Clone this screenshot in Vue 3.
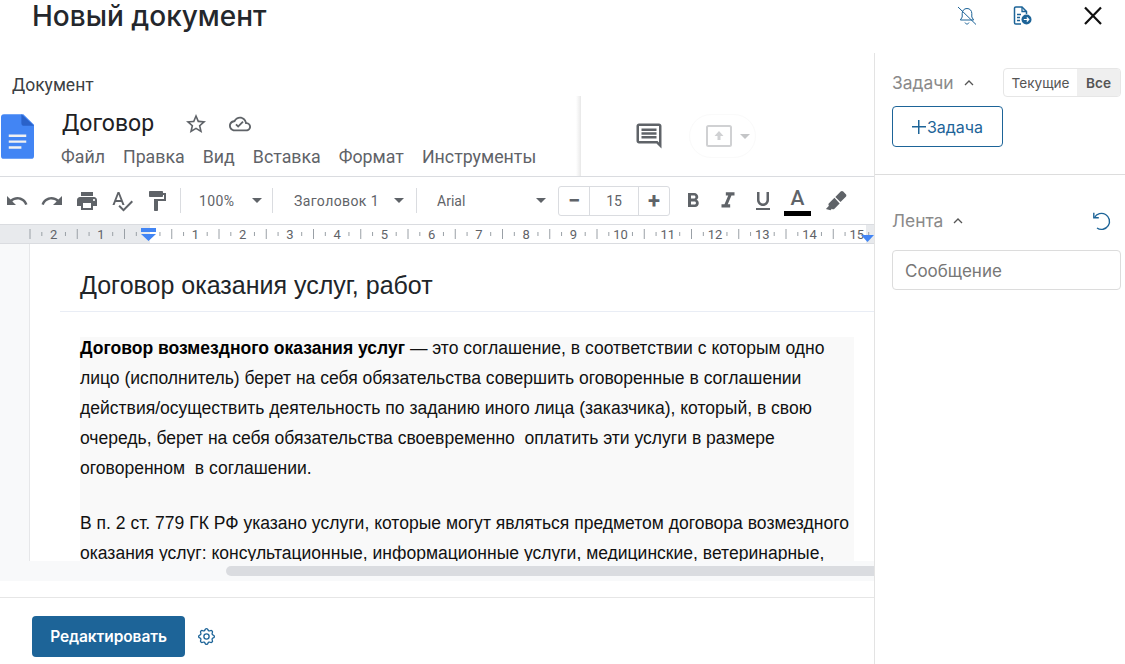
<script setup>
const menu = ['Файл', 'Правка', 'Вид', 'Вставка', 'Формат', 'Инструменты'];

const step = 47.25;
const start = 30;

// слева от отступа цифры идут вниз, справа вверх
const rulerLabels = [];
for (let i = 0; i < 18; i++) {
    const n = Math.abs(i - 2);
    if (n === 0) continue;
    rulerLabels.push({ n, key: i, x: start + step * i + step / 2 });
}

const majorTicks = Array.from({ length: 18 }, (_, i) => start + step * i);
const minorTicks = Array.from({ length: 18 }, (_, i) => start + step * i + step / 4)
    .concat(Array.from({ length: 18 }, (_, i) => start + step * i + (step * 3) / 4));
</script>

<template>
    <div class="page">
        <header class="top">
            <h1 class="top-title">Новый документ</h1>
            <div class="top-actions">
                <svg class="bell" width="24" height="24" viewBox="0 0 24 24" fill="none" stroke="#1d6498" stroke-width="1">
                    <path d="M12 4.500c-3 0-4.800 2.200-4.800 5v3.500l-1.800 3h13.200l-1.800-3V9.500c0-2.800-1.800-5-4.800-5z" />
                    <path d="M10 18.500c.4 1 1.100 1.500 2 1.500s1.600-.5 2-1.500" />
                    <path d="M3 3l18 17.500" />
                </svg>
                <svg class="doc-send" width="22" height="22" viewBox="0 0 22 22" fill="none">
                    <path d="M10 19H4.800A1.300 1.300 0 0 1 3.500 17.700V3.300A1.300 1.300 0 0 1 4.800 2H11l4.500 4.500V9" stroke="#1d6498" stroke-width="1.500" />
                    <path d="M11 2v4.500h4.500" stroke="#1d6498" stroke-width="1.300" />
                    <path d="M6 9.500h4M6 12.500h3M6 15.500h3" stroke="#1d6498" stroke-width="1.400" />
                    <circle cx="15.500" cy="14.500" r="5" fill="#1d6498" />
                    <path d="M12.800 14.500h5M15.800 12.500l2 2-2 2" stroke="#fff" stroke-width="1.200" />
                </svg>
                <svg class="close" width="20" height="20" viewBox="0 0 20 20" stroke="#111" stroke-width="2.200">
                    <path d="M2 1.500l16 16.500M18 1.500L2 18" />
                </svg>
            </div>
        </header>

        <div class="body">
            <main class="main">
                <div class="doc-label">Документ</div>

                <section class="gdoc">
                    <div class="gdoc-head">
                        <div class="gdoc-head-left">
                            <svg class="docs-logo" width="33" height="45" viewBox="0 0 34 46">
                                <path d="M3 0h20l11 11v32a3 3 0 0 1-3 3H3a3 3 0 0 1-3-3V3a3 3 0 0 1 3-3z" fill="#4285f4" />
                                <path d="M21 0l13 12H24a3 3 0 0 1-3-3z" fill="#2a62c9" />
                                <path d="M8 21h18v2.500H8zM8 27h18v2.500H8zM8 33h13v2.500H8z" fill="#f1f1f1" />
                            </svg>
                            <div class="gdoc-head-text">
                                <div class="gdoc-name-row">
                                    <span class="gdoc-name">Договор</span>
                                    <svg width="24" height="24" viewBox="0 0 24 24" fill="#5f6368">
                                        <path d="M22 9.240l-7.190-.62L12 2 9.190 8.630 2 9.240l5.460 4.730L5.820 21 12 17.270 18.180 21l-1.630-7.030L22 9.240zM12 15.400l-3.760 2.270 1-4.280-3.320-2.880 4.380-.38L12 6.100l1.710 4.040 4.380.38-3.320 2.880 1 4.280L12 15.400z" />
                                    </svg>
                                    <svg width="22" height="22" viewBox="0 0 24 24" fill="#5f6368">
                                        <path d="M19.350 10.040C18.670 6.590 15.640 4 12 4 9.110 4 6.600 5.640 5.350 8.040 2.340 8.360 0 10.910 0 14c0 3.310 2.690 6 6 6h13c2.760 0 5-2.240 5-5 0-2.640-2.050-4.780-4.650-4.960zM19 18H6c-2.210 0-4-1.790-4-4 0-2.050 1.530-3.760 3.560-3.970l1.070-.11.500-.95C8.080 7.140 9.940 6 12 6c2.620 0 4.880 1.860 5.390 4.430l.3 1.500 1.530.11c1.560.1 2.780 1.410 2.780 2.960 0 1.650-1.350 3-3 3zm-9-1.820l-3.090-3.090L8.320 11.680 10 13.360l4.600-4.600 1.410 1.410z" />
                                    </svg>
                                </div>
                                <nav class="gdoc-menu">
                                    <span v-for="item in menu" :key="item">{{ item }}</span>
                                </nav>
                            </div>
                        </div>
                        <div class="gdoc-head-right">
                            <svg width="30" height="30" viewBox="0 0 24 24" fill="#5f6368">
                                <path d="M21.990 4c0-1.100-.89-2-1.990-2H4c-1.100 0-2 .9-2 2v12c0 1.100.9 2 2 2h14l4 4-.01-18zM20 4v13.170L18.830 16H4V4h16zM6 12h12v2H6zm0-3h12v2H6zm0-3h12v2H6z" />
                            </svg>
                            <div class="share">
                                <svg width="28" height="24" viewBox="0 0 28 24" fill="none">
                                    <rect x="2" y="2" width="24" height="20" rx="1.500" stroke="#d0d1d3" stroke-width="2" />
                                    <path d="M14 7l-4.500 5h3v4h3v-4h3z" fill="#d0d1d3" />
                                </svg>
                                <i class="caret caret-light"></i>
                            </div>
                        </div>
                    </div>

                    <div class="toolbar">
                        <svg class="tool" width="24" height="24" viewBox="0 0 24 24"><path d="M12.500 8c-2.650 0-5.050.99-6.900 2.600L2 7v9h9l-3.620-3.620c1.390-1.160 3.160-1.880 5.120-1.880 3.540 0 6.550 2.310 7.600 5.500l2.370-.78C21.080 11.030 17.150 8 12.500 8z" /></svg>
                        <svg class="tool" width="24" height="24" viewBox="0 0 24 24"><path d="M18.400 10.600C16.550 8.990 14.150 8 11.500 8c-4.650 0-8.580 3.030-9.960 7.220L3.900 16c1.050-3.190 4.050-5.500 7.600-5.500 1.950 0 3.730.72 5.120 1.880L13 16h9V7l-3.600 3.600z" /></svg>
                        <svg class="tool" width="24" height="24" viewBox="0 0 24 24"><path d="M19 8H5c-1.660 0-3 1.340-3 3v6h4v4h12v-4h4v-6c0-1.660-1.340-3-3-3zm-3 11H8v-5h8v5zm3-7c-.55 0-1-.45-1-1s.45-1 1-1 1 .45 1 1-.45 1-1 1zm-1-9H6v4h12V3z" /></svg>
                        <svg class="tool" width="24" height="24" viewBox="0 0 24 24"><path d="M12.450 16h2.090L9.430 3H7.570L2.460 16h2.090l1.120-3h5.640l1.140 3zm-6.020-5L8.500 5.480 10.570 11H6.430zm15.160.59l-8.090 8.090L9.830 16l-1.410 1.410 5.090 5.090L23 13l-1.410-1.410z" /></svg>
                        <svg class="tool" width="24" height="24" viewBox="0 0 24 24"><path d="M18 4V3c0-.55-.45-1-1-1H5c-.55 0-1 .45-1 1v4c0 .55.45 1 1 1h12c.55 0 1-.45 1-1V6h1v4H9v11c0 .55.45 1 1 1h2c.55 0 1-.45 1-1v-9h8V4h-3z" /></svg>
                        <span class="sep"></span>
                        <div class="pick pick-zoom"><span>100%</span><i class="caret"></i></div>
                        <span class="sep"></span>
                        <div class="pick pick-style"><span>Заголовок 1</span><i class="caret"></i></div>
                        <span class="sep"></span>
                        <div class="pick pick-font"><span>Arial</span><i class="caret"></i></div>
                        <div class="size">
                            <span class="size-btn">−</span>
                            <span class="size-val">15</span>
                            <span class="size-btn">+</span>
                        </div>
                        <svg class="tool tool-b" width="24" height="24" viewBox="0 0 24 24"><path d="M15.600 10.790c.97-.67 1.650-1.770 1.650-2.790 0-2.260-1.750-4-4-4H7v14h7.040c2.090 0 3.710-1.700 3.710-3.790 0-1.520-.86-2.820-2.150-3.420zM10 6.500h3c.83 0 1.500.67 1.500 1.500s-.67 1.500-1.500 1.500h-3v-3zm3.500 9H10v-3h3.500c.83 0 1.500.67 1.500 1.500s-.67 1.500-1.500 1.500z" /></svg>
                        <svg class="tool tool-i" width="26" height="26" viewBox="0 0 24 24"><path d="M10 4v3h2.210l-3.420 8H6v3h8v-3h-2.210l3.420-8H18V4z" /></svg>
                        <svg class="tool tool-u" width="24" height="24" viewBox="0 0 24 24"><path d="M12 17c3.310 0 6-2.690 6-6V3h-2.500v8c0 1.930-1.570 3.500-3.500 3.500S8.500 12.930 8.500 11V3H6v8c0 3.310 2.690 6 6 6zm-7 2v2h14v-2H5z" /></svg>
                        <div class="text-color">
                            <span>A</span>
                            <i></i>
                        </div>
                        <svg class="tool tool-pen" width="22" height="22" viewBox="0 0 24 24"><path d="M18.500 1.150c-.53 0-1 .2-1.430.58l-5.810 5.820 5.650 5.650 5.820-5.810c.77-.78.77-2.040 0-2.830l-2.840-2.840c-.39-.39-.89-.57-1.390-.57zM10.300 8.500l-5.960 5.960c-.78.78-.78 2.040 0 2.830L1 20.700 6 22l1.500-1.500c.78.78 2.040.78 2.830 0l5.670-5.670z" /></svg>
                    </div>

                    <svg class="ruler" width="874" height="18" viewBox="0 0 874 18">
                        <rect width="874" height="18" fill="#fff" />
                        <rect width="150" height="18" fill="#e8eaed" />
                        <rect x="866" width="8" height="18" fill="#e8eaed" />
                        <path v-for="x in majorTicks" :key="'a' + x" :d="`M${x} 4v10`" stroke="#9aa0a6" />
                        <path v-for="x in minorTicks" :key="'b' + x" :d="`M${x} 7v4`" stroke="#9aa0a6" />
                        <text v-for="l in rulerLabels" :key="l.key" :x="l.x" y="14" text-anchor="middle" class="ruler-num">{{ l.n }}</text>
                        <path d="M141 3h15v4h-15zM141 9h15l-7.500 7z" fill="#4285f4" />
                        <path d="M861 10h13l-6.500 7z" fill="#4285f4" />
                    </svg>

                    <div class="doc-view">
                        <article class="sheet">
                            <h2 class="sheet-title">Договор оказания услуг, работ</h2>
                            <div class="sheet-copy">
                                <p>
                                    <b>Договор возмездного оказания услуг</b> — это соглашение, в соответствии с которым одно<br>
                                    лицо (исполнитель) берет на себя обязательства совершить оговоренные в соглашении<br>
                                    действия/осуществить деятельность по заданию иного лица (заказчика), который, в свою<br>
                                    очередь, берет на себя обязательства своевременно&nbsp; оплатить эти услуги в размере<br>
                                    оговоренном&nbsp; в соглашении.
                                </p>
                                <p>
                                    В п. 2 ст. 779 ГК РФ указано услуги, которые могут являться предметом договора возмездного<br>
                                    оказания услуг: консультационные, информационные услуги, медицинские, ветеринарные,
                                </p>
                            </div>
                        </article>
                    </div>
                    <div class="hscroll"><span class="hscroll-thumb"></span></div>
                </section>

                <footer class="foot">
                    <button type="button" class="edit-btn">Редактировать</button>
                    <svg width="21" height="21" viewBox="0 0 24 24" fill="none" stroke="#1d6498" stroke-width="1.500">
                        <path d="M10.325 4.317c.426-1.756 2.924-1.756 3.350 0a1.724 1.724 0 002.573 1.066c1.543-.94 3.310.826 2.370 2.370a1.724 1.724 0 001.065 2.572c1.756.426 1.756 2.924 0 3.350a1.724 1.724 0 00-1.066 2.573c.94 1.543-.826 3.310-2.370 2.370a1.724 1.724 0 00-2.572 1.065c-.426 1.756-2.924 1.756-3.350 0a1.724 1.724 0 00-2.573-1.066c-1.543.94-3.310-.826-2.370-2.370a1.724 1.724 0 00-1.065-2.572c-1.756-.426-1.756-2.924 0-3.350a1.724 1.724 0 001.066-2.573c-.94-1.543.826-3.310 2.370-2.370.996.608 2.296.07 2.572-1.065z" />
                        <circle cx="12" cy="12" r="3" />
                    </svg>
                </footer>
            </main>

            <aside class="side">
                <section class="side-tasks">
                    <div class="side-row">
                        <span class="side-title">Задачи</span>
                        <svg class="chev" width="12" height="8" viewBox="0 0 12 8" fill="none" stroke="#555" stroke-width="1.300"><path d="M2 6l4-4 4 4" /></svg>
                        <div class="seg">
                            <span class="seg-item seg-cur">Текущие</span>
                            <span class="seg-item seg-on">Все</span>
                        </div>
                    </div>
                    <button type="button" class="task-btn"><span class="plus"></span>Задача</button>
                </section>
                <section class="side-feed">
                    <div class="side-row">
                        <span class="side-title">Лента</span>
                        <svg class="chev" width="12" height="8" viewBox="0 0 12 8" fill="none" stroke="#555" stroke-width="1.300"><path d="M2 6l4-4 4 4" /></svg>
                        <svg class="reload" width="20" height="20" viewBox="0 0 20 20" fill="none" stroke="#1d6498" stroke-width="1.400">
                            <path d="M3.500 6.500A8 8 0 1 1 6 17" />
                            <path d="M2.800 1.800v5h5" />
                        </svg>
                    </div>
                    <div class="msg">Сообщение</div>
                </section>
            </aside>
        </div>
    </div>
</template>

<style>
html,body{margin:0;background:#fff}
</style>

<style scoped>
.page{width:1125px;height:664px;overflow:hidden;display:flex;flex-direction:column;background:#fff;font-family:Inter,"Liberation Sans",sans-serif}
.top{height:53px;flex:none;display:flex;align-items:flex-start;justify-content:space-between;padding:0 22px 0 32px;box-sizing:border-box}
.top-title{margin:0;font-size:28px;line-height:32px;font-weight:500;color:#24272c}
.top-actions{display:flex;align-items:center;height:31px}
.bell{margin-right:32px}
.doc-send{margin-right:50px}
.body{flex:1;display:flex;min-height:0}
.main{width:874px;flex:none;display:flex;flex-direction:column}
.doc-label{height:43px;box-sizing:border-box;padding:21px 0 0 12px;font:17.500px/22px Roboto,sans-serif;color:#3c4043}
.gdoc{display:flex;flex-direction:column;height:485px;background:#f8f9fa;font-family:Roboto,sans-serif}
.gdoc-head{height:81px;flex:none;display:flex;background:#fff;border-bottom:1px solid #dadce0;box-sizing:border-box}
.gdoc-head-left{width:581px;flex:none;display:flex;box-sizing:border-box;position:relative}
.gdoc-head-left::after{content:"";position:absolute;top:0;right:0;bottom:0;width:5px;background:linear-gradient(90deg,#fff,#e8e8e8)}
.docs-logo{margin:18px 0 0 1px}
.gdoc-head-text{margin-left:28px}
.gdoc-name-row{display:flex;align-items:center;height:24px;margin-top:16px}
.gdoc-name{font-size:23px;line-height:24px;color:#202124;margin-right:30px}
.gdoc-name-row svg+svg{margin-left:21px}
.gdoc-menu{display:flex;gap:18px;margin-top:9px;font-size:17.800px;line-height:24px;color:#5f6368;margin-left:-1px}
.gdoc-head-right{flex:1;display:flex;align-items:center;padding:0 0 0 53px;height:80px}
.share{display:flex;align-items:center;justify-content:flex-start;gap:7px;margin-left:25px;width:67px;height:44px;box-sizing:border-box;padding-left:15px;border:1px solid #fafafa;border-radius:22px}
.toolbar{height:48px;flex:none;display:flex;align-items:center;background:#fff;border-bottom:1px solid #dadce0;box-sizing:border-box;padding-left:5px;color:#5f6368}
.tool{fill:#5f6368;flex:none;margin-right:11px}
.sep{width:1px;height:25px;background:#dadce0;flex:none}
.pick{display:flex;align-items:center;justify-content:space-between;box-sizing:border-box;font-size:14px;color:#5f6368;flex:none}
.pick-zoom{width:91px;padding:0 10px 0 18px;letter-spacing:.4px}
.pick-style{width:143px;padding:0 12px 0 21px;letter-spacing:.4px}
.pick-font{width:141px;padding:0 12px 0 20px}
.caret{display:block;width:0;height:0;border:5px solid transparent;border-top:5px solid #5f6368;border-bottom:0}
.caret-light{border-top-color:#c4c5c7}
.size{width:112px;height:30px;flex:none;display:flex;border:1px solid #dadce0;border-radius:3px;box-sizing:border-box;color:#5f6368}
.size-btn{width:30px;display:flex;align-items:center;justify-content:center;font-size:22px;font-weight:700;line-height:1}
.size-val{flex:1;display:flex;align-items:center;justify-content:center;font-size:14px;border-left:1px solid #dadce0;border-right:1px solid #dadce0}
.tool-b{margin-left:11px;margin-right:10px}
.tool-i{margin-right:10px}
.tool-u{margin-right:9px}
.text-color{width:27px;height:30px;display:flex;flex-direction:column;align-items:center;font-size:21px;line-height:25px;font-weight:500;margin-right:14px}
.text-color i{width:27px;height:5px;background:#000;flex:none}
.text-color span{height:25px}
.tool-pen{margin-right:0}
.ruler{display:block;flex:none;border-bottom:1px solid #dadce0;background:#fff}
.ruler-num{font:13px Roboto,sans-serif;fill:#5f6368}
.doc-view{height:317px;flex:none;overflow:hidden;padding-left:29px;box-sizing:border-box}
.sheet{height:100%;background:#fff;border-left:1px solid #e6e7e9;padding-left:30px;box-sizing:content-box;overflow:hidden}
.sheet-title{margin:0;height:68px;box-sizing:border-box;border-bottom:1px solid #e9edf5;padding:26px 0 0 20px;font:400 25px/30px "Liberation Sans",Arial,sans-serif;color:#212529}
.sheet-copy{display:flow-root;margin:25px 0 0 20px;width:774px;background:#f9f9f9;font:17.550px/30px "Liberation Sans",Arial,sans-serif;color:#111;white-space:nowrap}
.sheet-copy p{margin:0 0 25px}
.sheet-copy p:first-child{margin-top:-4px}
.sheet-copy b{color:#000}
.hscroll{height:20px;flex:none;padding:5px 0 0 226px;box-sizing:border-box}
.hscroll-thumb{display:block;height:10px;border-radius:5px 0 0 5px;background:#dadce0}
.foot{flex:1;margin-top:16px;border-top:1px solid #e6e6e6;display:flex;align-items:flex-start;padding:18px 0 0 32px;gap:11px}
.foot svg{margin-top:10px}
.edit-btn{width:153px;height:41px;border:0;border-radius:4px;background:#1d6498;color:#fff;font:600 15.500px Inter,sans-serif;letter-spacing:-.1px}
.side{flex:1;border-left:1px solid #e3e3e3}
.side-tasks{height:122px;box-sizing:border-box;border-bottom:1px solid #ddd;padding:15px 4px 0 17px}
.side-row{display:flex;align-items:center}
.side-title{font-size:17.400px;line-height:28px;color:#8a8a8a}
.chev{margin-left:9px}
.seg{margin-left:auto;display:flex;height:29px;border:1px solid #e6e6e6;border-radius:4px;box-sizing:border-box;overflow:hidden;font-size:13.600px;color:#555}
.seg-item{display:flex;align-items:center;justify-content:center}
.seg-cur{width:73px}
.seg-on{width:43px;background:#efefef;font-weight:600}
.task-btn{display:flex;align-items:center;justify-content:center;width:111px;height:41px;margin-top:9px;border:1px solid #1d6498;border-radius:4px;background:#fff;color:#1d6498;font:16px Inter,sans-serif;padding:0}
.plus{width:14px;height:14px;margin-right:1px;background:linear-gradient(#1d6498,#1d6498) center/100% 1.500px no-repeat,linear-gradient(#1d6498,#1d6498) center/1.500px 100% no-repeat}
.side-feed{padding:32px 4px 0 17px}
.side-feed .reload{margin-left:auto;margin-right:10px}
.msg{height:40px;margin-top:15px;border:1px solid #dcdcdc;border-radius:4px;box-sizing:border-box;padding:0 12px;font-size:17px;line-height:40px;color:#777}
</style>
